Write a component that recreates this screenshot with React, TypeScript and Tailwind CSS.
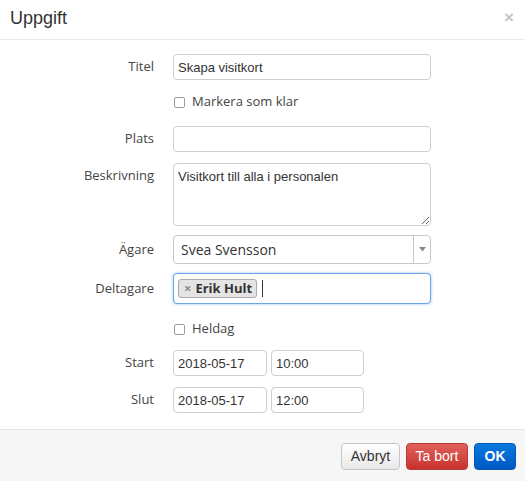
import React from "react";

const labelCls =
  "w-[154px] shrink-0 text-right text-[13px] text-[#444] [font-family:'Open_Sans',sans-serif]";
const inputCls =
  "h-full w-full rounded-[4px] border border-[#cfcfcf] bg-white px-[4px] text-[13px] text-[#333] outline-none [font-family:'Liberation_Sans',Arial,sans-serif]";

function Checkbox({ label }: { label: string }) {
  return (
    <div className="flex h-[20px] items-center pl-[173px]">
      <span className="ml-[1px] h-[11px] w-[11px] rounded-[2px] border border-[#9a9a9a] bg-white" />
      <span className="ml-[7px] text-[13px] text-[#444] [font-family:'Open_Sans',sans-serif]">
        {label}
      </span>
    </div>
  );
}

export default function App() {
  return (
    <div className="flex h-[481px] w-[525px] flex-col bg-white [font-family:'Liberation_Sans',Arial,sans-serif]">
      {/* Header */}
      <div className="flex h-[40px] shrink-0 items-center justify-between border-b border-[#e9e9e9] pl-[10px] pr-[11px]">
        <span className="mt-[-2px] text-[18px] text-[#333]">Uppgift</span>
        <span className="mt-[-4px] text-[17px] font-bold text-[#c4c4c4]">×</span>
      </div>

      {/* Body */}
      <div className="flex flex-1 flex-col pt-[14px]">
        {/* Titel */}
        <div className="flex h-[26px] items-center gap-[19px]">
          <div className={labelCls}>Titel</div>
          <div className="h-full w-[258px]">
            <input className={inputCls} defaultValue="Skapa visitkort" readOnly />
          </div>
        </div>

        <div className="mt-[12px]">
          <Checkbox label="Markera som klar" />
        </div>

        {/* Plats */}
        <div className="mt-[14px] flex h-[26px] items-center gap-[19px]">
          <div className={labelCls}>Plats</div>
          <div className="h-full w-[258px]">
            <input className={inputCls} defaultValue="" readOnly />
          </div>
        </div>

        {/* Beskrivning */}
        <div className="mt-[11px] flex h-[63px] items-start gap-[19px]">
          <div className={labelCls + " pt-[3px]"}>Beskrivning</div>
          <div className="h-full w-[258px]">
            <textarea
              className={inputCls + " resize-y py-[5px] leading-[16px]"}
              defaultValue="Visitkort till alla i personalen"
              readOnly
            />
          </div>
        </div>

        {/* Ägare */}
        <div className="mt-[9px] flex h-[29px] items-center gap-[19px]">
          <div className={labelCls}>Ägare</div>
          <div className="flex h-full w-[258px] items-stretch rounded-[4px] border border-[#c8c8c8] bg-white">
            <div className="flex flex-1 items-center pl-[7px] text-[14px] text-[#333] [font-family:'Open_Sans',sans-serif]">
              Svea Svensson
            </div>
            <div className="flex w-[17px] items-center justify-center border-l border-[#c8c8c8]">
              <svg width="7" height="5" viewBox="0 0 7 5">
                <path d="M0 0 L7 0 L3.5 4.5 Z" fill="#888" />
              </svg>
            </div>
          </div>
        </div>

        {/* Deltagare */}
        <div className="mt-[9px] flex h-[31px] items-center gap-[19px]">
          <div className={labelCls}>Deltagare</div>
          <div className="flex h-full w-[258px] items-center rounded-[4px] border border-[#6aa6e3] bg-white pl-[4px] shadow-[0_0_3px_rgba(82,150,220,0.6)]">
            <div className="flex h-[19px] items-center rounded-[3px] border border-[#aaa] bg-[#e4e4e4] pl-[5px] pr-[4px]">
              <span className="text-[13px] font-bold leading-none text-[#888] [font-family:'Open_Sans',sans-serif]">×</span>
              <span className="ml-[4px] text-[13px] font-bold text-[#333] [font-family:'Open_Sans',sans-serif]">
                Erik Hult
              </span>
            </div>
            <span className="ml-[5px] h-[17px] w-[1px] bg-[#333]" />
          </div>
        </div>

        <div className="mt-[15px]">
          <Checkbox label="Heldag" />
        </div>

        {/* Start */}
        <div className="mt-[11px] flex h-[26px] items-center gap-[19px]">
          <div className={labelCls}>Start</div>
          <div className="flex h-full gap-[4px]">
            <div className="h-full w-[94px]">
              <input className={inputCls} defaultValue="2018-05-17" readOnly />
            </div>
            <div className="h-full w-[93px]">
              <input className={inputCls} defaultValue="10:00" readOnly />
            </div>
          </div>
        </div>

        {/* Slut */}
        <div className="mt-[11px] flex h-[26px] items-center gap-[19px]">
          <div className={labelCls}>Slut</div>
          <div className="flex h-full gap-[4px]">
            <div className="h-full w-[94px]">
              <input className={inputCls} defaultValue="2018-05-17" readOnly />
            </div>
            <div className="h-full w-[93px]">
              <input className={inputCls} defaultValue="12:00" readOnly />
            </div>
          </div>
        </div>
      </div>

      {/* Footer */}
      <div className="flex h-[52px] shrink-0 items-start justify-end gap-[6px] border-t border-[#e5e5e5] bg-[#f6f6f6] pr-[9px] pt-[13px]">
        <button className="h-[27px] w-[59px] rounded-[4px] border border-[#c6c6c6] bg-gradient-to-b from-white to-[#e8e8e8] text-[14px] text-[#333]">
          Avbryt
        </button>
        <button className="h-[27px] w-[62px] rounded-[4px] border border-[#b93a36] bg-gradient-to-b from-[#e0605b] to-[#c9302c] text-[14px] text-white">
          Ta bort
        </button>
        <button className="h-[27px] w-[42px] rounded-[4px] border border-[#0257b5] bg-gradient-to-b from-[#0a7ae0] to-[#0058c4] text-[14px] font-bold text-white">
          OK
        </button>
      </div>
    </div>
  );
}
